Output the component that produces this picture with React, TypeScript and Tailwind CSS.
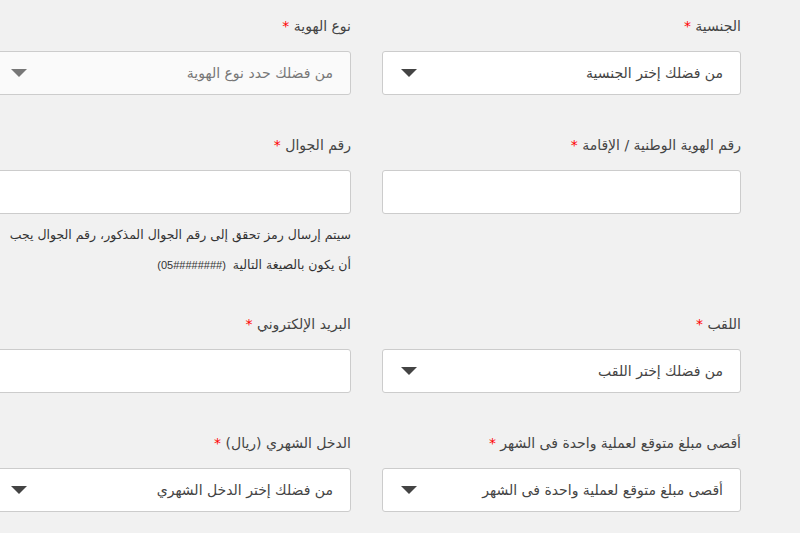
import type { ReactNode } from "react";

const FONT = "font-['DejaVu_Sans',sans-serif]";

function Label({ children }: { children: ReactNode }) {
  return (
    <label className="mb-[14px] block text-[14px] leading-[22px] text-[#444]">
      {children} <span className="text-[#ff0000]">*</span>
    </label>
  );
}

function Arrow({ muted }: { muted?: boolean }) {
  return (
    <svg width="16" height="8" viewBox="0 0 16 8" className="shrink-0">
      <path d="M0 0h16L8 8z" fill={muted ? "#777" : "#444"} />
    </svg>
  );
}

function SelectBox({ text, disabled }: { text: string; disabled?: boolean }) {
  return (
    <div
      className={`flex h-[44px] items-center justify-between rounded-[3px] border border-[#ccc] pl-[18px] pr-[17px] ${
        disabled ? "bg-[#fafafa] text-[#777]" : "bg-white text-[#444]"
      }`}
    >
      <span className="whitespace-nowrap text-[14px]">{text}</span>
      <Arrow muted={disabled} />
    </div>
  );
}

function InputBox() {
  return <div className="h-[44px] rounded-[3px] border border-[#ccc] bg-white" />;
}

export default function App() {
  return (
    <div dir="rtl" className={`min-h-[533px] w-full overflow-hidden bg-[#f1f1f1] ${FONT}`}>
      <div className="grid grid-cols-[359px_359px] gap-x-[31px] gap-y-[39px] pr-[59px] pt-[15px]">
        <div>
          <Label>الجنسية</Label>
          <SelectBox text="من فضلك إختر الجنسية" />
        </div>
        <div>
          <Label>نوع الهوية</Label>
          <SelectBox text="من فضلك حدد نوع الهوية" disabled />
        </div>

        <div>
          <Label>رقم الهوية الوطنية / الإقامة</Label>
          <InputBox />
        </div>
        <div>
          <Label>رقم الجوال</Label>
          <InputBox />
          <div className="-mb-[6px] mt-[6px] whitespace-nowrap text-[12.5px] text-[#333]">
            <p className="leading-[30px]">سيتم إرسال رمز تحقق إلى رقم الجوال المذكور، رقم الجوال يجب</p>
            <p className="leading-[30px]">
              أن يكون بالصيغة التالية
              <span dir="ltr" className="mr-[7px] font-['Liberation_Sans',sans-serif] text-[11px]">
                (05########)
              </span>
            </p>
          </div>
        </div>

        <div>
          <Label>اللقب</Label>
          <SelectBox text="من فضلك إختر اللقب" />
        </div>
        <div>
          <Label>البريد الإلكتروني</Label>
          <InputBox />
        </div>

        <div>
          <Label>أقصى مبلغ متوقع لعملية واحدة فى الشهر</Label>
          <SelectBox text="أقصى مبلغ متوقع لعملية واحدة فى الشهر" />
        </div>
        <div>
          <Label>الدخل الشهري (ريال)</Label>
          <SelectBox text="من فضلك إختر الدخل الشهري" />
        </div>
      </div>
    </div>
  );
}
